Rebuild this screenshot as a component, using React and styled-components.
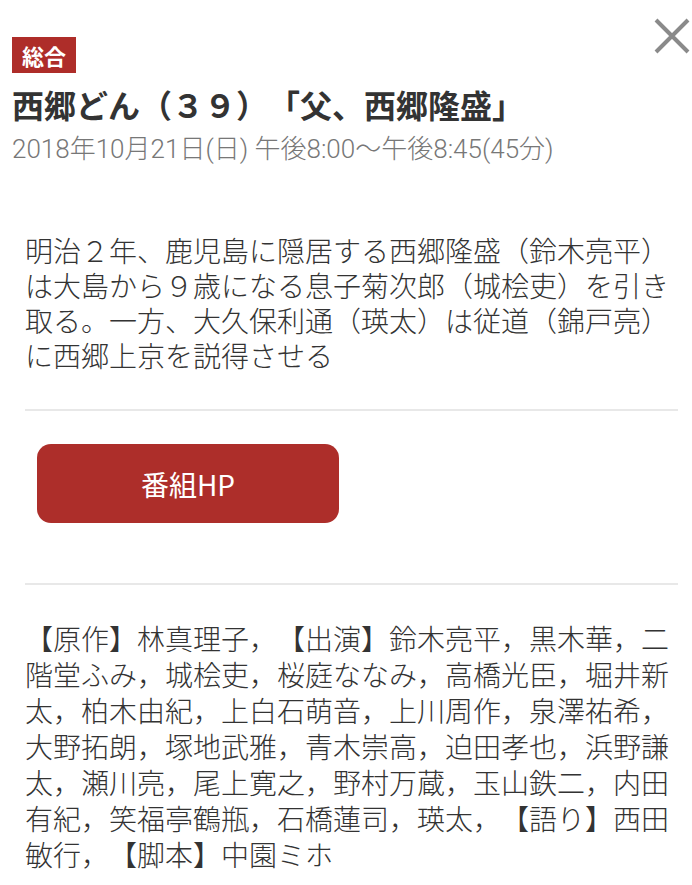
import React from "react";
import styled, { createGlobalStyle } from "styled-components";

const Global = createGlobalStyle`
  html, body { margin: 0; padding: 0; background: #fff; }
  body {
    font-family: "Noto Sans CJK JP", "Noto Sans", sans-serif;
    color: #333;
    text-spacing-trim: space-all;
    font-kerning: none;
  }
`;

const Page = styled.div`
  width: 692px;
  min-height: 885px;
  box-sizing: border-box;
  position: relative;
  background: #fff;
`;

const Header = styled.header`
  padding: 37px 0 0 12px;
  display: flex;
  flex-direction: column;
  align-items: flex-start;
`;

const Badge = styled.span`
  display: inline-flex;
  align-items: center;
  justify-content: center;
  height: 36px;
  width: 64px;
  background: #ae2d29;
  color: #fff;
  font-size: 22px;
  font-weight: 700;
  line-height: 1;
`;

const Title = styled.h1`
  margin: 10px 0 0;
  font-size: 32px;
  font-weight: 700;
  line-height: 42px;
  color: #333;
  letter-spacing: 0;
  white-space: nowrap;
`;

const DateLine = styled.div`
  margin-top: 8px;
  font-family: Roboto, "Noto Sans CJK JP", sans-serif;
  font-size: 26px;
  line-height: 32px;
  color: #777;
  font-weight: 300;
  white-space: nowrap;
`;

const CloseButton = styled.button`
  position: absolute;
  top: 16px;
  right: 0;
  width: 40px;
  height: 40px;
  padding: 0;
  border: 0;
  background: transparent;
  display: flex;
  align-items: center;
  justify-content: center;
`;

const Section = styled.section`
  margin: 0 14px 0 25px;
  padding: ${(p) => p.$pad};
  border-bottom: ${(p) => (p.$last ? "none" : "2px solid #e8e8e8")};
`;

const Body = styled.p`
  margin: 0;
  font-size: 28px;
  font-weight: 300;
  line-height: ${(p) => p.$lh}px;
  color: #333;
  width: 644px;
`;

const HPButton = styled.a`
  display: flex;
  align-items: center;
  justify-content: center;
  margin-left: 12px;
  width: 302px;
  height: 79px;
  border-radius: 14px;
  background: #ad2e2a;
  color: #fff;
  font-size: 28px;
  font-weight: 400;
  text-decoration: none;
`;

export default function App() {
  return (
    <Page>
      <Global />
      <Header>
        <Badge>総合</Badge>
        <Title>西郷どん（３９）「父、西郷隆盛」</Title>
        <DateLine>2018年10月21日(日) 午後8:00〜午後8:45(45分)</DateLine>
      </Header>
      <CloseButton aria-label="閉じる">
        <svg width="36" height="36" viewBox="0 0 36 36">
          <path d="M2 2 L34 34 M34 2 L2 34" stroke="#8a8a8a" strokeWidth="4" />
        </svg>
      </CloseButton>
      <Section $pad="68px 0 36px">
        <Body $lh={35}>
          明治２年、鹿児島に隠居する西郷隆盛（鈴木亮平）は大島から９歳になる息子菊次郎（城桧吏）を引き取る。一方、大久保利通（瑛太）は従道（錦戸亮）に西郷上京を説得させる
        </Body>
      </Section>
      <Section $pad="33px 0 60px">
        <HPButton href="#">番組HP</HPButton>
      </Section>
      <Section $pad="35px 0 0" $last>
        <Body $lh={36}>
          【原作】林真理子，【出演】鈴木亮平，黒木華，二階堂ふみ，城桧吏，桜庭ななみ，高橋光臣，堀井新太，柏木由紀，上白石萌音，上川周作，泉澤祐希，大野拓朗，塚地武雅，青木崇高，迫田孝也，浜野謙太，瀬川亮，尾上寛之，野村万蔵，玉山鉄二，内田有紀，笑福亭鶴瓶，石橋蓮司，瑛太，【語り】西田敏行，【脚本】中園ミホ
        </Body>
      </Section>
    </Page>
  );
}
